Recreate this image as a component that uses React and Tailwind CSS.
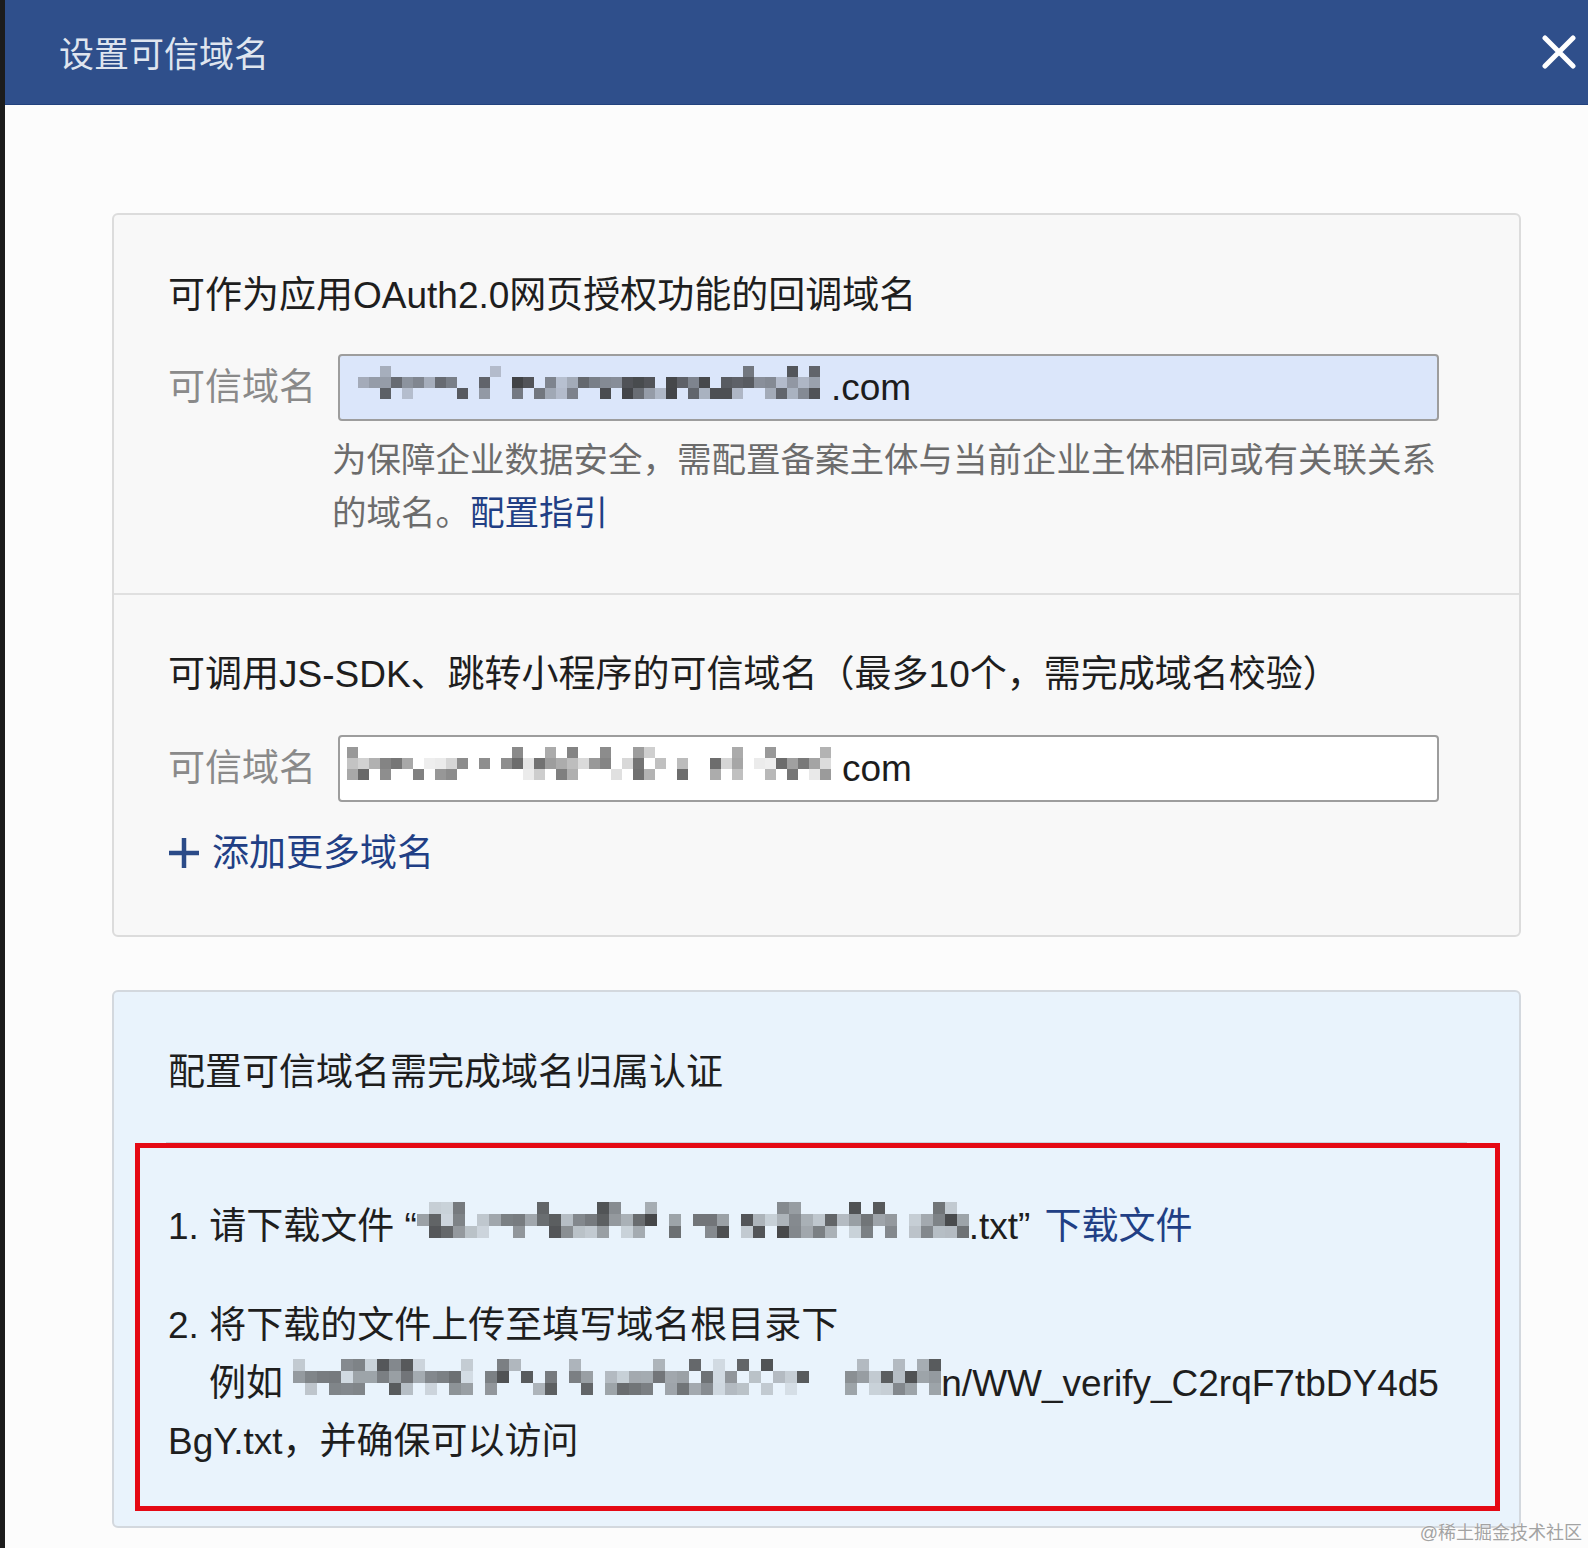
import React from 'react';

function mulberry32(a) {
  return function () {
    a |= 0;
    a = (a + 0x6d2b79f5) | 0;
    let t = Math.imul(a ^ (a >>> 15), 1 | a);
    t = (t + Math.imul(t ^ (t >>> 7), 61 | t)) ^ t;
    return ((t ^ (t >>> 14)) >>> 0) / 4294967296;
  };
}

function Mosaic({ width, block = 11, seed = 1, dens = [0.3, 0.9, 0.55], opMin = 0.15, opMax = 0.85, color = '#262626', gapP = 0.06 }) {
  const r = mulberry32(seed);
  const cols = Math.floor(width / block);
  const rects = [];
  for (let c = 0; c < cols; c++) {
    const gap = r() < gapP;
    for (let row = 0; row < 3; row++) {
      const v = r();
      const o = opMin + r() * (opMax - opMin);
      if (!gap && v < dens[row]) {
        rects.push(
          <rect key={c + '-' + row} x={c * block} y={row * block} width={block} height={block} fill={color} fillOpacity={o.toFixed(2)} />
        );
      }
    }
  }
  return (
    <svg width={cols * block} height={block * 4} className="shrink-0">
      {rects}
    </svg>
  );
}

function Field({ filled, seed, light }) {
  return (
    <div className="flex items-center h-[67px]">
      <div className="w-[170px] shrink-0 text-[37px] leading-none text-[#8a8a8a]">可信域名</div>
      <div
        className={
          'w-[1101px] h-[67px] shrink-0 rounded-[4px] border-2 border-[#9d9d9d] flex items-center pl-[7px] text-[37px] text-[#1c1c1c] ' +
          (filled ? 'bg-[#dbe6fa]' : 'bg-white')
        }
      >
        <Mosaic
          width={light ? 495 : 484}
          block={11}
          seed={seed}
          dens={light ? [0.25, 0.85, 0.45] : [0.3, 0.9, 0.6]}
          opMin={light ? 0.08 : 0.2}
          opMax={light ? 0.7 : 0.85}
        />
        <span className="leading-none">{light ? 'com' : '.com'}</span>
      </div>
    </div>
  );
}

export default function App() {
  return (
    <div className="relative w-[1588px] h-[1548px] overflow-hidden flex bg-[#fcfcfc] font-['Liberation_Sans','Noto_Sans_CJK_SC',sans-serif]">
      <div className="w-[5px] shrink-0 bg-[#1c1c1c]" />
      <div className="flex-1 flex flex-col">
        <div className="h-[105px] shrink-0 bg-[#2f4f8b] border-b border-[#22427d] flex items-center justify-between pl-[54px] pr-[12px]">
          <div className="mt-[4px] text-[35px] leading-none text-[#dfe5ef]">设置可信域名</div>
          <svg width="34" height="34" viewBox="0 0 34 34">
            <path d="M3 3 L31 31 M31 3 L3 31" stroke="#ffffff" strokeWidth="5" strokeLinecap="round" />
          </svg>
        </div>

        <div className="pt-[108px] pl-[107px]">
          <div className="w-[1409px] border-2 border-[#dcdcdc] rounded-[6px] bg-[#f8f8f8]">
            <div className="pt-[55px] pb-[53px] pl-[54px]">
              <div className="h-[52px] leading-[52px] text-[37px] text-[#1e1e1e] whitespace-nowrap">
                可作为应用OAuth2.0网页授权功能的回调域名
              </div>
              <div className="mt-[32px]">
                <Field filled seed={7} />
              </div>
              <div className="mt-[13px] ml-[164px] w-[1110px] text-[34.5px] leading-[53px] text-[#6c6c6c] whitespace-nowrap">
                为保障企业数据安全，需配置备案主体与当前企业主体相同或有关联关系
                <br />
                的域名。<span className="text-[#213f85]">配置指引</span>
              </div>
            </div>
            <div className="h-[2px] bg-[#e0e0e0]" />
            <div className="pt-[54px] pb-[56px] pl-[54px]">
              <div className="h-[52px] leading-[52px] text-[37px] text-[#1e1e1e] whitespace-nowrap">
                可调用JS-SDK、跳转小程序的可信域名（最多10个，需完成域名校验）
              </div>
              <div className="mt-[34px]">
                <Field seed={23} light />
              </div>
              <div className="mt-[25px] h-[52px] flex items-center gap-[12px] text-[37px] text-[#213f85]">
                <svg width="32" height="32" viewBox="0 0 32 32" className="shrink-0">
                  <path d="M16 1 V31 M1 16 H31" stroke="#2b4b88" strokeWidth="4.5" />
                </svg>
                <span className="leading-none">添加更多域名</span>
              </div>
            </div>
          </div>

          <div className="mt-[53px] w-[1409px] border-2 border-[#d3d8de] rounded-[6px] bg-[#e9f3fc]">
            <div className="pt-[55px] pl-[54px] h-[107px]">
              <div className="h-[52px] leading-[52px] text-[37px] text-[#1e1e1e] whitespace-nowrap">
                配置可信域名需完成域名归属认证
              </div>
            </div>
            <div className="mt-[43px] mx-[52px] h-px bg-[#c8d2dc]" />
            <div className="ml-[21px] w-[1365px] border-[5px] border-[#e50914] pt-[49px] pb-[36px] pl-[28px] text-[37px] text-[#1e1e1e]">
              <div className="h-[58px] flex items-center whitespace-pre">
                <span className="leading-none">1. 请下载文件 “</span>
                <Mosaic width={552} block={12} seed={101} dens={[0.35, 0.9, 0.6]} opMin={0.12} opMax={0.85} />
                <span className="leading-none">.txt”</span>
                <span className="ml-[14px] leading-none text-[#213f85]">下载文件</span>
              </div>
              <div className="mt-[41px] h-[58px] flex items-center whitespace-pre">
                <span className="leading-none">2. 将下载的文件上传至填写域名根目录下</span>
              </div>
              <div className="h-[58px] flex items-center pl-[41px] whitespace-pre">
                <span className="leading-none">例如 </span>
                <Mosaic width={649} block={12} seed={57} dens={[0.3, 0.9, 0.55]} opMin={0.1} opMax={0.8} />
                <span className="leading-none">n/WW_verify_C2rqF7tbDY4d5</span>
              </div>
              <div className="h-[58px] flex items-center whitespace-pre">
                <span className="leading-none">BgY.txt，并确保可以访问</span>
              </div>
            </div>
            <div className="h-[15px]" />
          </div>
        </div>
      </div>
      <div className="absolute right-[6px] bottom-[6px] text-[18px] leading-none text-[#a3a3a3] [text-shadow:0_0_2px_#ffffff]">
        @稀土掘金技术社区
      </div>
    </div>
  );
}
